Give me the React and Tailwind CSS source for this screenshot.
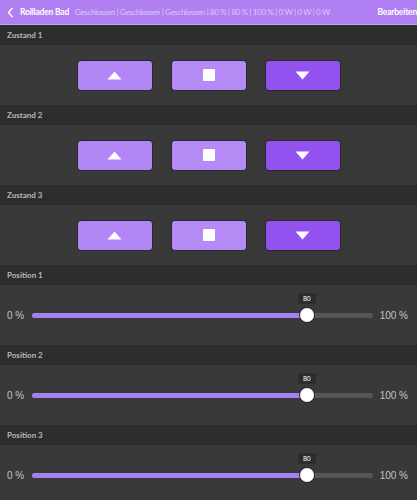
import React from "react";

const font = { fontFamily: '"Lato", "Noto Sans", sans-serif' };
const sliderFont = { fontFamily: '"Liberation Sans", Arial, sans-serif' };

const Up = () => (
  <svg width="15" height="9" viewBox="0 0 15 9">
    <polygon points="7.5,0.5 14.5,8.5 0.5,8.5" fill="#fff" />
  </svg>
);

const Down = () => (
  <svg width="15" height="9" viewBox="0 0 15 9">
    <polygon points="0.5,0.5 14.5,0.5 7.5,8.5" fill="#fff" />
  </svg>
);

const Stop = () => <div className="w-[12px] h-[12px] rounded-[1px] bg-white" />;

const SectionHead = ({ title }) => (
  <div className="h-[20px] bg-[#2d2d2d] flex items-center px-[7px] text-[8px] font-bold text-[#b8b8b8]">
    {title}
  </div>
);

const Zustand = ({ title }) => (
  <div>
    <SectionHead title={title} />
    <div className="h-[60px] bg-[#393939] flex items-center justify-center gap-[20px]">
      <button className="w-[74px] h-[29px] rounded-[3px] bg-[#b185f4] ring-1 ring-[#2a2a2a] flex items-center justify-center">
        <Up />
      </button>
      <button className="w-[74px] h-[29px] rounded-[3px] bg-[#b68bf6] ring-1 ring-[#2a2a2a] flex items-center justify-center">
        <Stop />
      </button>
      <button className="w-[74px] h-[29px] rounded-[3px] bg-[#9352f0] ring-1 ring-[#2a2a2a] flex items-center justify-center">
        <Down />
      </button>
    </div>
  </div>
);

const Position = ({ title, value }) => (
  <div>
    <SectionHead title={title} />
    <div
      className="h-[60px] bg-[#393939] flex items-center pl-[7px] pr-[9px] text-[10px] text-[#c4c4c4]"
      style={sliderFont}
    >
      <span className="w-[25px]">0 %</span>
      <div className="flex-1 relative h-[5px] rounded-full bg-[#565656]">
        <div
          className="absolute left-0 top-0 h-[5px] rounded-full bg-[#a77ef0]"
          style={{ width: value + "%" }}
        />
        <div
          className="absolute top-1/2 w-[14px] h-[14px] -ml-[5px] -mt-[7px] rounded-full bg-white ring-1 ring-[#2a2a2a]"
          style={{ left: value + "%" }}
        >
          <div className="absolute left-1/2 -translate-x-1/2 -top-[15px] w-[18px] h-[11px] rounded-[2px] bg-[#2c2c2c] text-white text-[7px] leading-[11px] text-center">
            {value}
          </div>
        </div>
      </div>
      <span className="w-[35px] text-right">100 %</span>
    </div>
  </div>
);

const App = () => {
  return (
    <div className="w-[417px] h-[500px] overflow-hidden bg-[#393939]" style={font}>
      {/* top bar */}
      <div className="h-[25px] bg-[#b07ff2] border-b border-[#c6a3f6] flex items-center pl-[7px] text-[8.5px] whitespace-nowrap">
        <svg width="7" height="11" viewBox="0 0 7 11" className="mr-[6px] shrink-0">
          <polyline points="5.5,1 1.5,5.5 5.5,10" fill="none" stroke="#fff" strokeWidth="1.4" />
        </svg>
        <span className="font-bold text-white tracking-[-0.2px]">Rollladen Bad</span>
        <span className="ml-[6px] text-[8px] text-[#dccaf9] tracking-[-0.35px]">
          Geschlossen | Geschlossen | Geschlossen | 80 % | 80 % | 100 % | 0 W | 0 W | 0 W
        </span>
        <span className="ml-auto font-bold text-white tracking-[-0.2px]">Bearbeiten</span>
      </div>

      <Zustand title="Zustand 1" />
      <Zustand title="Zustand 2" />
      <Zustand title="Zustand 3" />
      <Position title="Position 1" value={80} />
      <Position title="Position 2" value={80} />
      <Position title="Position 3" value={80} />
    </div>
  );
};

export default App;
